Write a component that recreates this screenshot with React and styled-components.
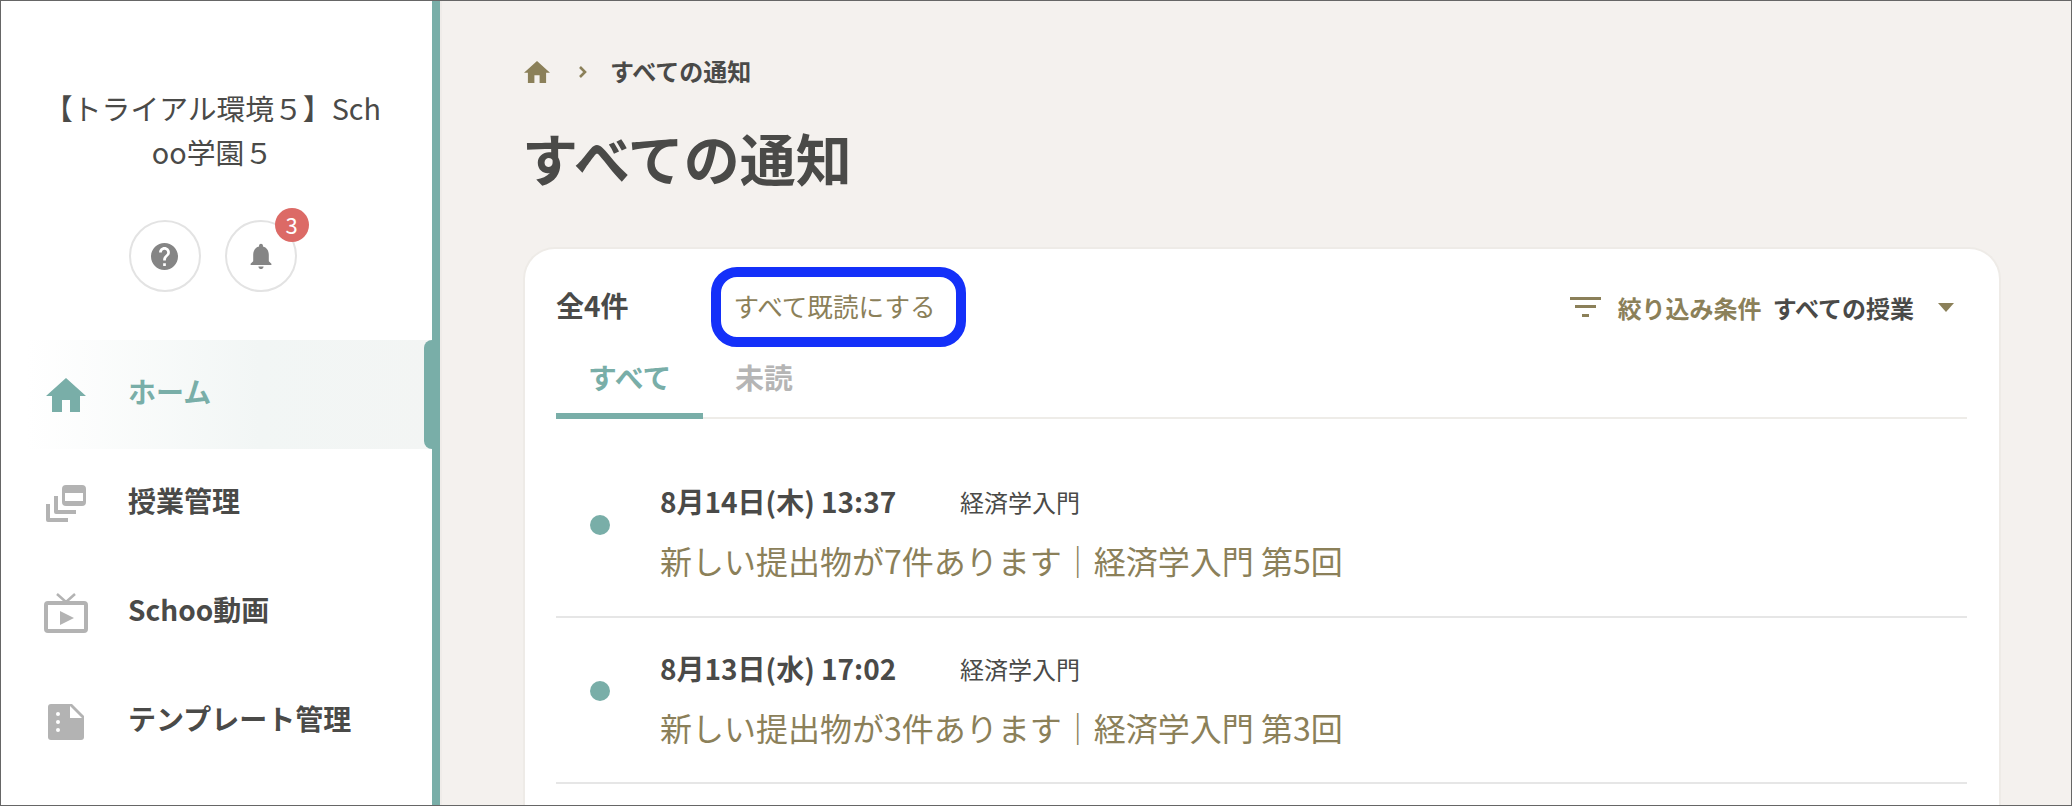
import React from "react";
import styled, { createGlobalStyle } from "styled-components";

const Global = createGlobalStyle`
  html, body { margin: 0; padding: 0; background: #f4f1ee; }
  * { box-sizing: border-box; }
  body { font-family: "Noto Sans CJK JP", "Noto Sans", sans-serif; color: #4a4a48; }
`;

const TEAL = "#79aea8";
const OLIVE = "#8b8059";

const Page = styled.div`
  width: 2072px; height: 806px; border: 1px solid #666; overflow: hidden;
  display: flex; background: #f4f1ee;
`;
const Sidebar = styled.aside`
  width: 439px; flex: none; background: #fff; border-right: 8px solid ${TEAL};
  padding-top: 85px; display: flex; flex-direction: column;
`;
const School = styled.div`
  width: 340px; height: 88px; align-self: center; margin-left: -8px; text-align: center; font-size: 28.8px; line-height: 44px;
  word-break: break-all;
`;
const IconRow = styled.div`
  display: flex; justify-content: center; gap: 24px; margin: 46px 8px 48px 0;
`;
const RoundButton = styled.div`
  position: relative; width: 72px; height: 72px; border-radius: 50%; border: 2px solid #e3e3e3;
  display: flex; align-items: center; justify-content: center; color: #858585;
`;
const Badge = styled.span`
  position: absolute; top: -14px; right: -14px; width: 34px; height: 34px; border-radius: 50%;
  background: #dc6a66; color: #fff; font-size: 22px; line-height: 32px; text-align: center;
`;
const NavItem = styled.div`
  position: relative; height: 109px; display: flex; align-items: center; padding-left: 43px; gap: 40px;
  font-size: 28px; font-weight: 700; color: ${p => (p.$active ? TEAL : "#4a4a48")};
  background: ${p => (p.$active ? "linear-gradient(90deg, #fff 6%, #f2f6f5 60%, #f3f5f4 100%)" : "transparent")};
  ${p => p.$active && `&::after { content: ""; position: absolute; top: 0; bottom: 0; right: -8px; width: 16px;
    background: ${TEAL}; border-radius: 8px 0 0 8px; }`}
`;
const NavIcon = styled.span`
  width: 44px; height: 44px; flex: none; display: flex; align-items: center; justify-content: center;
  color: ${p => (p.$active ? TEAL : "#b3b3b3")};
`;
const NavLabel = styled.span`
  padding-bottom: 8px;
`;
const Main = styled.main`
  flex: 1; min-width: 0; padding: 0 70px 0 83px; box-shadow: inset 2px 0 0 #efece9;
`;
const Crumbs = styled.div`
  display: flex; align-items: center; height: 36px; margin-top: 53px; padding-left: 1px; font-size: 24px; line-height: 36px; font-weight: 700;
`;
const CrumbText = styled.span`
  margin-top: -3px;
`;
const CrumbHome = styled.span`
  display: flex; color: ${OLIVE}; width: 28px;
`;
const CrumbSep = styled.span`
  display: flex; color: ${OLIVE}; margin: 0 22px 0 26px;
`;
const Title = styled.h1`
  margin: 27px 0 0 -1px; font-size: 56px; line-height: 80px; font-weight: 700; height: 80px;
`;
const Card = styled.section`
  margin-top: 50px; background: #fff; border: 2px solid #eeebe7; border-bottom: 0;
  border-radius: 32px 32px 0 0; padding: 18px 32px 0 31px; height: 600px;
`;
const CardHead = styled.div`
  display: flex; align-items: center; height: 80px;
`;
const Count = styled.div`
  width: 155px; font-size: 28px; font-weight: 700; margin-top: -4px; white-space: nowrap;
`;
const MarkRead = styled.button`
  width: 255px; height: 80px; background: #fff; border: 10px solid #1430f9; border-radius: 26px;
  font: inherit; font-size: 25.6px; color: ${OLIVE}; padding: 0 8px 4px 0; white-space: nowrap;
`;
const Filter = styled.div`
  margin-left: auto; display: flex; align-items: center; font-size: 24px; font-weight: 700; padding-right: 13px;
`;
const FilterLabel = styled.span`
  color: ${OLIVE}; margin: 0 11px 0 17px;
`;
const Caret = styled.span`
  width: 0; height: 0; border-left: 8.5px solid transparent; border-right: 8.5px solid transparent;
  border-top: 9px solid ${OLIVE}; margin-left: 24px;
`;
const Tabs = styled.div`
  display: flex; height: 72px; box-shadow: inset 0 -3px 0 -1px #eeece8;
`;
const Tab = styled.div`
  height: 72px; padding: 0 32px 8px; display: flex; align-items: center; justify-content: center;
  min-width: ${p => (p.$active ? "147px" : "0")};
  font-size: 28.8px; font-weight: 700; color: ${p => (p.$active ? TEAL : "#b5b5b5")};
  border-bottom: 6px solid ${p => (p.$active ? TEAL : "transparent")};
`;
const Row = styled.article`
  padding-left: 104px; position: relative; border-bottom: 2px solid #e6e6e6;
  display: flex; flex-direction: column; padding-top: ${p => (p.$first ? "62px" : "30px")};
  height: ${p => (p.$first ? "199px" : "166px")};
`;
const Dot = styled.span`
  position: absolute; left: 34px; bottom: 81px; width: 20px; height: 20px; border-radius: 50%; background: ${TEAL};
`;
const Meta = styled.div`
  display: flex; align-items: center; height: 40px;
`;
const When = styled.span`
  width: 300px; font-size: 28px; font-weight: 700; white-space: nowrap;
`;
const Course = styled.span`
  font-size: 24px;
`;
const Message = styled.div`
  margin-top: 19px; font-size: 32px; line-height: 40px; color: ${OLIVE};
`;

const HomeIcon = ({ s = 40 }) => (
  <svg width={s} height={s} viewBox="2 3 20 17" fill="currentColor"><path d="M10 20v-6h4v6h5v-8h3L12 3 2 12h3v8z" /></svg>
);

export default function App() {
  return (
    <>
      <Global />
      <Page>
        <Sidebar>
          <School>【トライアル環境５】Schoo学園５</School>
          <IconRow>
            <RoundButton>
              <svg width="27" height="27" viewBox="2 2 20 20" fill="currentColor"><path d="M12 2C6.48 2 2 6.48 2 12s4.48 10 10 10 10-4.48 10-10S17.52 2 12 2zm1 17h-2v-2h2v2zm2.07-7.75-.9.92C13.45 12.9 13 13.5 13 15h-2v-.5c0-1.1.45-2.1 1.17-2.83l1.24-1.26c.37-.36.59-.86.59-1.41 0-1.1-.9-2-2-2s-2 .9-2 2H8c0-2.21 1.79-4 4-4s4 1.79 4 4c0 .88-.36 1.68-.93 2.25z" /></svg>
            </RoundButton>
            <RoundButton>
              <svg width="22" height="26" viewBox="4 2 16 20" fill="currentColor"><path d="M12 22c1.1 0 2-.9 2-2h-4c0 1.1.9 2 2 2zm6-6v-5c0-3.07-1.63-5.64-4.5-6.32V4c0-.83-.67-1.5-1.5-1.5s-1.5.67-1.5 1.5v.68C7.64 5.36 6 7.92 6 11v5l-2 2v1h16v-1l-2-2z" /></svg>
              <Badge>3</Badge>
            </RoundButton>
          </IconRow>
          <nav>
            <NavItem $active>
              <NavIcon $active><HomeIcon s={40} /></NavIcon>
              <NavLabel>ホーム</NavLabel>
            </NavItem>
            <NavItem>
              <NavIcon>
                <svg width="40" height="37" viewBox="0 0 40 37" fill="currentColor">
                  <path fillRule="evenodd" d="M20 0h16a4 4 0 0 1 4 4v13a4 4 0 0 1-4 4H20a4 4 0 0 1-4-4V4a4 4 0 0 1 4-4zM19 8v8h18V8z" />
                  <path d="M8 11h4v14h18v4H10a2 2 0 0 1-2-2z" />
                  <path d="M0 19h4v14h18v4H2a2 2 0 0 1-2-2z" />
                </svg>
              </NavIcon>
              <NavLabel>授業管理</NavLabel>
            </NavItem>
            <NavItem>
              <NavIcon>
                <svg width="44" height="40" viewBox="0 0 44 40" fill="none" stroke="currentColor">
                  <rect x="2" y="10" width="40" height="28" rx="2" strokeWidth="4" />
                  <path d="M13 1l9 8 9-8" strokeWidth="2.5" />
                  <path d="M16 18l14 7-14 7z" fill="currentColor" stroke="none" />
                </svg>
              </NavIcon>
              <NavLabel>Schoo動画</NavLabel>
            </NavItem>
            <NavItem>
              <NavIcon>
                <svg width="36" height="36" viewBox="0 0 36 36">
                  <path d="M3 0h21l12 12v21a3 3 0 0 1-3 3H3a3 3 0 0 1-3-3V3a3 3 0 0 1 3-3z" fill="currentColor" />
                  <path d="M22 2v12h12z" fill="#fff" />
                  <circle cx="10" cy="10" r="2" fill="#fff" /><circle cx="10" cy="18" r="2" fill="#fff" /><circle cx="10" cy="26" r="2" fill="#fff" />
                </svg>
              </NavIcon>
              <NavLabel>テンプレート管理</NavLabel>
            </NavItem>
          </nav>
        </Sidebar>
        <Main>
          <Crumbs>
            <CrumbHome><HomeIcon s={26} /></CrumbHome>
            <CrumbSep>
              <svg width="10" height="14" viewBox="0 0 10 14" fill="none" stroke="currentColor" strokeWidth="2.6"><path d="M2 2l5 5-5 5" /></svg>
            </CrumbSep>
            <CrumbText>すべての通知</CrumbText>
          </Crumbs>
          <Title>すべての通知</Title>
          <Card>
            <CardHead>
              <Count>全4件</Count>
              <MarkRead>すべて既読にする</MarkRead>
              <Filter>
                <svg width="31" height="20" viewBox="0 0 31 20" fill={OLIVE}><rect width="31" height="3" /><rect x="5" y="8" width="21" height="3" /><rect x="12" y="17" width="7" height="3" /></svg>
                <FilterLabel>絞り込み条件</FilterLabel>
                すべての授業
                <Caret />
              </Filter>
            </CardHead>
            <Tabs>
              <Tab $active>すべて</Tab>
              <Tab>未読</Tab>
            </Tabs>
            <Row $first>
              <Dot />
              <Meta><When>8月14日(木) 13:37</When><Course>経済学入門</Course></Meta>
              <Message>新しい提出物が7件あります｜経済学入門 第5回</Message>
            </Row>
            <Row>
              <Dot />
              <Meta><When>8月13日(水) 17:02</When><Course>経済学入門</Course></Meta>
              <Message>新しい提出物が3件あります｜経済学入門 第3回</Message>
            </Row>
          </Card>
        </Main>
      </Page>
    </>
  );
}
